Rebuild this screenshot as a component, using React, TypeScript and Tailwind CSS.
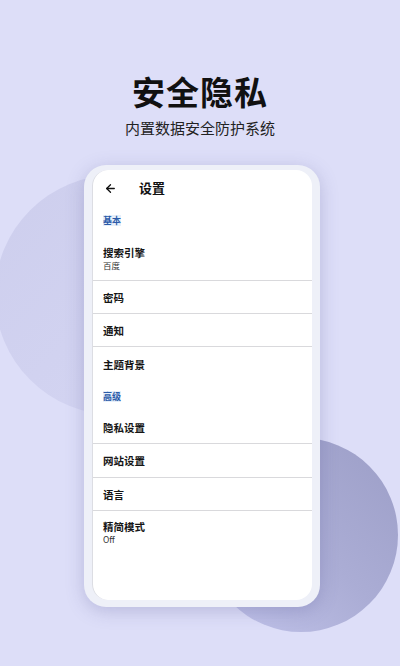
import { ArrowLeft } from 'lucide-react';

type Row = { title: string; sub?: string; h: string };

const basic: Row[] = [
  { title: '搜索引擎', sub: '百度', h: 'h-[47px]' },
  { title: '密码', h: 'h-[33px]' },
  { title: '通知', h: 'h-[33px]' },
  { title: '主题背景', h: 'h-[34px]' },
];

const advanced: Row[] = [
  { title: '隐私设置', h: 'h-[33px]' },
  { title: '网站设置', h: 'h-[34px]' },
  { title: '语言', h: 'h-[33px]' },
  { title: '精简模式', sub: 'Off', h: 'h-[40px]' },
];

function SettingRow({ row, last }: { row: Row; last: boolean }) {
  return (
    <div className={`${row.h} flex flex-col justify-center px-[10px] ${last ? '' : 'border-b border-[#d9d9dc]'} ${row.sub ? 'pt-[3px]' : ''}`}>
      <div className="text-[10.5px] font-bold leading-[13px] text-[#151515]">{row.title}</div>
      {row.sub && <div className="text-[8.5px] leading-[12px] text-[#333]">{row.sub}</div>}
    </div>
  );
}

function SectionLabel({ text, h }: { text: string; h: string }) {
  return (
    <div className={`${h} flex items-center px-[10px]`}>
      <span className="bg-[#e6effa] text-[9px] font-bold leading-[11px] text-[#2a5aa8]">{text}</span>
    </div>
  );
}

export default function App() {
  return (
    <div
      className="relative h-[666px] w-[400px] overflow-hidden bg-[#dddef8]"
      style={{ fontFamily: '"Noto Sans CJK SC", "Noto Sans", sans-serif' }}
    >
      {/* background shapes */}
      <div className="absolute left-[-5px] top-[175px] h-[240px] w-[240px] rounded-full bg-linear-to-br from-[#cdceed] to-[#d5d6f3]" />
      <div className="absolute left-[204px] top-[438px] h-[194px] w-[194px] rounded-full bg-linear-to-bl from-[#9c9ec7] via-[#abadd5] to-[#c3c5ec]" />

      <div className="relative flex flex-col items-center">
        <h1 className="mt-[73px] text-[33px] font-bold leading-[36px] tracking-[1px] text-[#111]">安全隐私</h1>
        <p className="mt-[10px] text-[15px] leading-[18px] text-[#222]">内置数据安全防护系统</p>
      </div>

      {/* phone */}
      <div className="relative ml-[84px] mt-[28px] h-[442px] w-[236px] rounded-[22px] bg-[#eef0f8] px-[8px] pb-[7px] pt-[5px] shadow-[0_4px_18px_rgba(90,90,150,0.28)]">
        <div className="flex h-full flex-col overflow-hidden rounded-[16px] border-l border-[#dcdde3] bg-white">
          <div className="flex h-[36px] shrink-0 items-center pl-[11px]">
            <ArrowLeft size={13} strokeWidth={2.4} className="text-[#111]" />
            <span className="ml-[22px] text-[13px] font-bold text-[#111]">设置</span>
          </div>
          <SectionLabel text="基本" h="h-[28px]" />
          {basic.map((r, i) => (
            <SettingRow key={r.title} row={r} last={i === basic.length - 1} />
          ))}
          <SectionLabel text="高级" h="h-[30px]" />
          {advanced.map((r, i) => (
            <SettingRow key={r.title} row={r} last={i === advanced.length - 1} />
          ))}
        </div>
      </div>
    </div>
  );
}
